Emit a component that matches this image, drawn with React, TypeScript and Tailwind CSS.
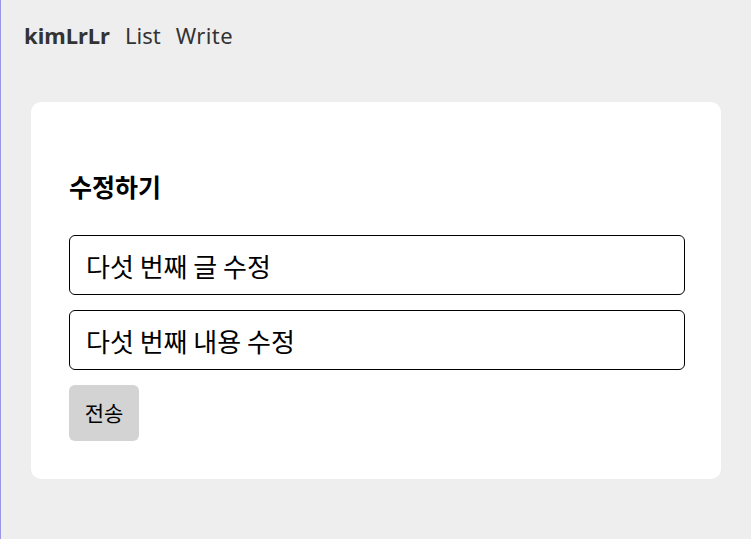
export default function App() {
  return (
    <div className="min-h-[539px] bg-[#eeeeee] border-l border-[#9b97e8] font-['Noto_Sans','Noto_Sans_CJK_KR',sans-serif] text-[#333]">
      {/* Top nav */}
      <nav className="flex items-center gap-[15px] px-[23px] pt-[16px] h-[54px] text-[22px] leading-none">
        <span className="font-bold">kimLrLr</span>
        <span>List</span>
        <span className="tracking-[0.4px]">Write</span>
      </nav>

      <main className="px-[30px] pt-[48px]">
        <div className="bg-white rounded-[10px] pl-[38px] pr-[36px] pt-[72px] pb-[38px]">
          <h2 className="text-[25px] font-bold text-black leading-none mb-[36px] font-['Noto_Sans_CJK_KR',sans-serif]">
            수정하기
          </h2>
          <form className="flex flex-col gap-[15px] items-start" onSubmit={(e) => e.preventDefault()}>
            <input
              defaultValue="다섯 번째 글 수정"
              className="w-full h-[60px] rounded-[6px] border border-black px-[16px] text-[26px] text-black outline-none font-['Noto_Sans_CJK_KR',sans-serif]"
            />
            <input
              defaultValue="다섯 번째 내용 수정"
              className="w-full h-[60px] rounded-[6px] border border-black px-[16px] text-[26px] text-black outline-none font-['Noto_Sans_CJK_KR',sans-serif]"
            />
            <button
              type="submit"
              className="w-[70px] h-[56px] rounded-[6px] bg-[#d3d3d3] text-[21px] text-black font-['Noto_Sans_CJK_KR',sans-serif]"
            >
              전송
            </button>
          </form>
        </div>
      </main>
    </div>
  );
}
